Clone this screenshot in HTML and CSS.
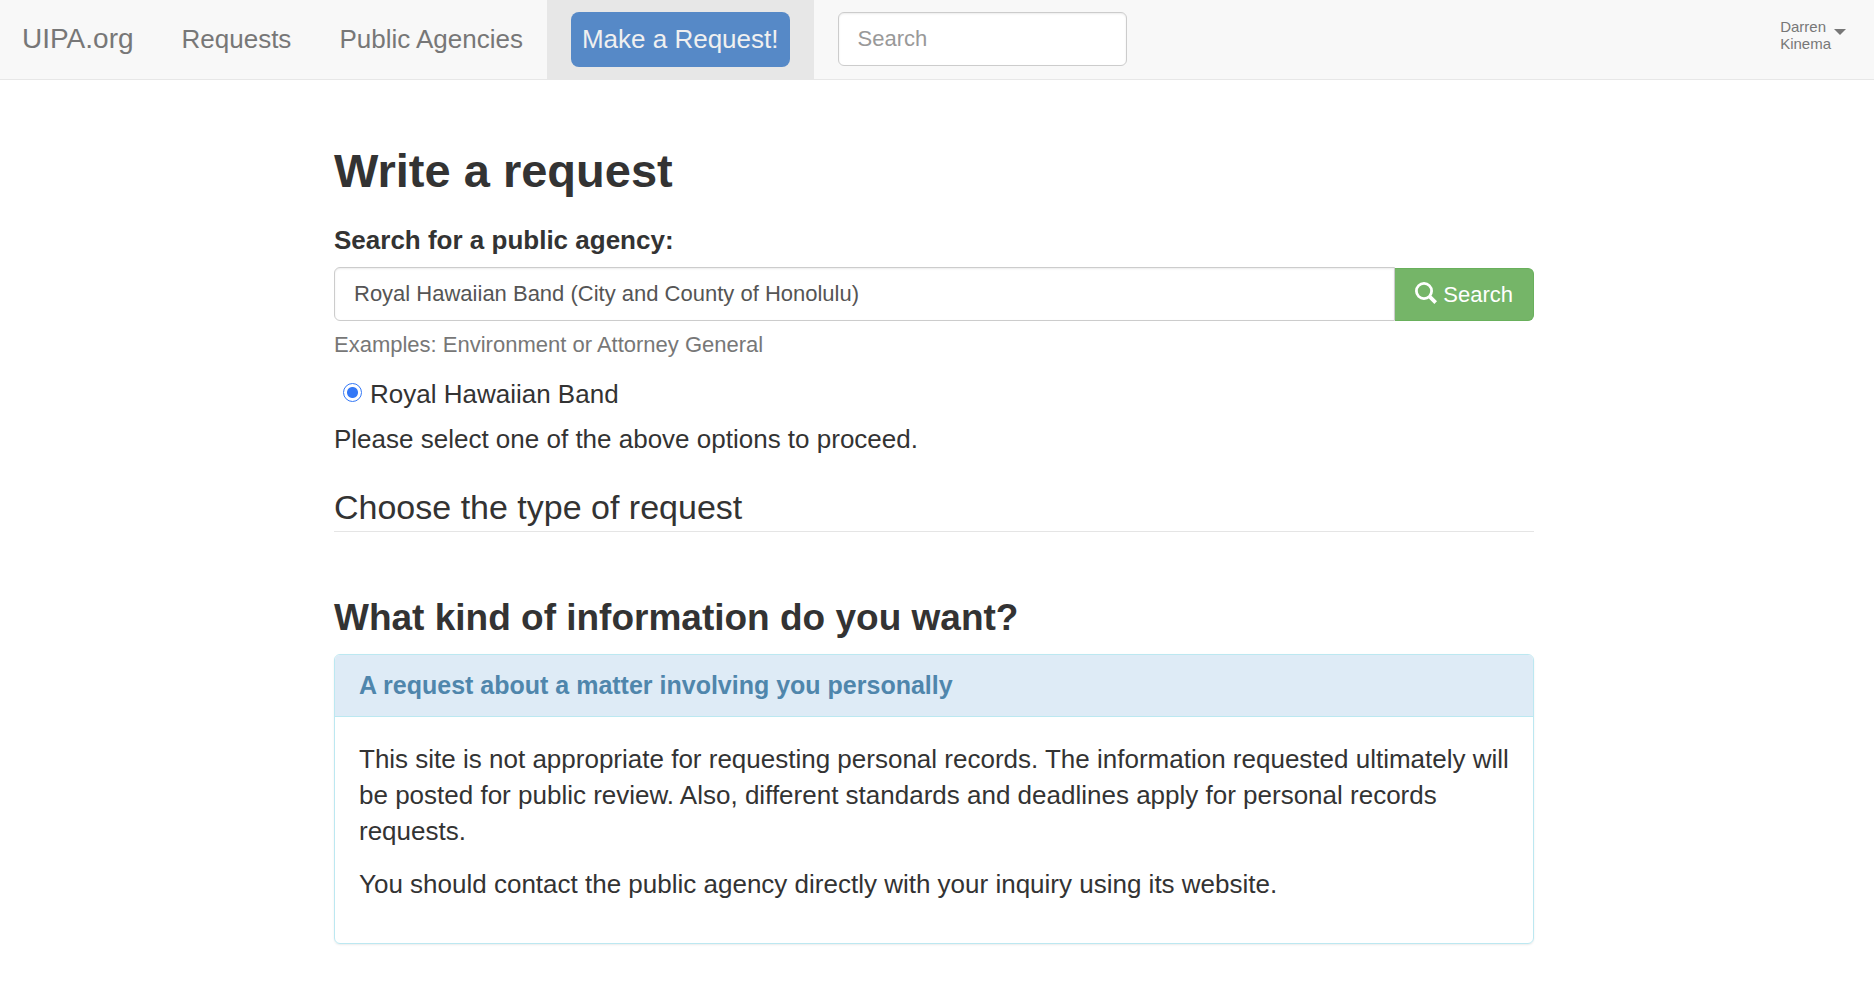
FILE: index.html
```html
<!DOCTYPE html>
<html lang="en">
<head>
<meta charset="utf-8">
<meta name="viewport" content="width=device-width, initial-scale=1">
<title>Write a request - UIPA.org</title>
<link rel="stylesheet" href="styles.css">
</head>
<body>
<header class="navbar">
  <a class="brand" href="#">UIPA.org</a>
  <nav class="nav">
    <a class="nav-link" href="#">Requests</a>
    <a class="nav-link" href="#">Public Agencies</a>
    <a class="nav-link active" href="#"><span class="cta">Make a Request!</span></a>
  </nav>
  <form class="nav-search">
    <input class="control" type="search" placeholder="Search" aria-label="Search">
  </form>
  <button class="user" type="button">
    <span>Darren<br>Kinema</span>
    <span class="caret"></span>
  </button>
</header>
<main class="page">
  <div class="container">
    <h1 class="title">Write a request</h1>
    <form class="agency">
      <label class="label" for="agency">Search for a public agency:</label>
      <div class="input-group">
        <input class="control" id="agency" type="text" value="Royal Hawaiian Band (City and County of Honolulu)">
        <button class="search-btn" type="button">
          <svg class="icon" viewBox="0 0 22 22" aria-hidden="true"><circle cx="9" cy="9" r="7.6" fill="none" stroke="currentColor" stroke-width="2.8"/><path d="M14.2 14.2 20.7 20.6" stroke="currentColor" stroke-width="3.8"/></svg>
          <span>Search</span>
        </button>
      </div>
      <p class="help">Examples: Environment or Attorney General</p>
      <label class="option"><input class="radio" type="radio" name="body" checked><span>Royal Hawaiian Band</span></label>
      <p class="hint">Please select one of the above options to proceed.</p>
    </form>
    <h3 class="legend">Choose the type of request</h3>
    <h2 class="question">What kind of information do you want?</h2>
    <section class="panel">
      <h4 class="panel-title">A request about a matter involving you personally</h4>
      <div class="panel-body">
        <p>This site is not appropriate for requesting personal records. The information requested ultimately will be posted for public review. Also, different standards and deadlines apply for personal records requests.</p>
        <p>You should contact the public agency directly with your inquiry using its website.</p>
      </div>
    </section>
  </div>
</main>
</body>
</html>
```

FILE: styles.css
```css
* { box-sizing: border-box; }
body {
  margin: 0;
  background: #fff;
  color: #333;
  font: 26px/36px "Liberation Sans", Arial, sans-serif;
}
h1, h2, h3, h4, p { margin: 0; }
a { text-decoration: none; }
input, button { font-family: inherit; }

.navbar {
  display: flex;
  align-items: center;
  height: 80px;
  padding-bottom: 1px;
  background: #f8f8f8;
  border-bottom: 1px solid #e7e7e7;
  color: #777;
}
.brand { padding: 0 24px 0 22px; font-size: 28px; color: #777; }
.nav { display: flex; align-self: stretch; }
.nav-link { display: flex; align-items: center; padding: 0 24px; color: #777; }
.active { margin-bottom: -1px; padding-bottom: 1px; background: #e7e7e7; }
.cta {
  padding: 9px 11px 10px;
  border-radius: 8px;
  background: #5689c7;
  color: #f0f0f0;
}
.nav-search { display: flex; width: 289px; margin-left: 24px; }
.control {
  width: 100%;
  height: 54px;
  padding: 0 19px;
  border: 1px solid #ccc;
  border-radius: 6px;
  background: #fff;
  box-shadow: inset 0 1px 2px rgba(0, 0, 0, .08);
  color: #555;
  font-size: 22px;
}
.control::placeholder { color: #999; opacity: 1; }
.user {
  display: flex;
  align-items: center;
  gap: 3px;
  margin: 0 28px 8px auto;
  padding: 0;
  border: 0;
  background: none;
  color: #777;
  font-size: 15px;
  line-height: 17px;
  text-align: left;
}
.caret {
  margin-bottom: 6px;
  border: 6px solid transparent;
  border-top-color: #777;
  border-bottom: 0;
}

.page { padding: 66px 6px 40px 0; }
.container { max-width: 1200px; margin: 0 auto; }
.title { font-size: 47px; line-height: 50px; }
.agency { display: flex; flex-direction: column; margin-top: 26px; }
.label { font-weight: bold; }
.input-group { display: flex; align-items: flex-end; margin-top: 9px; }
.input-group .control { flex: 1; border-radius: 6px 0 0 6px; }
.search-btn {
  display: flex;
  align-items: center;
  gap: 6px;
  height: 53px;
  padding: 0 20px;
  border: 1px solid #69b05c;
  border-left: 0;
  border-radius: 0 6px 6px 0;
  background: #75b568;
  color: #fff;
  font-size: 22px;
}
.icon { width: 22px; height: 22px; margin-bottom: 3px; }
.help { margin-top: 8px; color: #777; font-size: 22px; line-height: 32px; }
.option { display: flex; align-items: center; gap: 8px; margin-top: 15px; padding-left: 9px; }
.radio {
  appearance: none;
  width: 19px;
  height: 19px;
  margin: 0 0 3px;
  border: 1px solid #3478f6;
  border-radius: 50%;
  background: radial-gradient(circle, #3478f6 5px, #fff 6px);
}
.hint { margin-top: 9px; }
.legend {
  margin-top: 26px;
  border-bottom: 1px solid #e5e5e5;
  font-size: 34px;
  font-weight: normal;
  line-height: 48px;
}
.question { margin-top: 64px; font-size: 37px; line-height: 44px; }
.panel {
  margin-top: 14px;
  border: 1px solid #bce8f1;
  border-radius: 6px;
  box-shadow: 0 1px 2px rgba(0, 0, 0, .08);
}
.panel-title {
  padding: 12px 24px 13px;
  border-bottom: 1px solid #bce8f1;
  border-radius: 5px 5px 0 0;
  background: #deebf6;
  color: #4f86ac;
  font-size: 25px;
}
.panel-body { padding: 24px; }
.panel-body p { margin-bottom: 17px; }
```
